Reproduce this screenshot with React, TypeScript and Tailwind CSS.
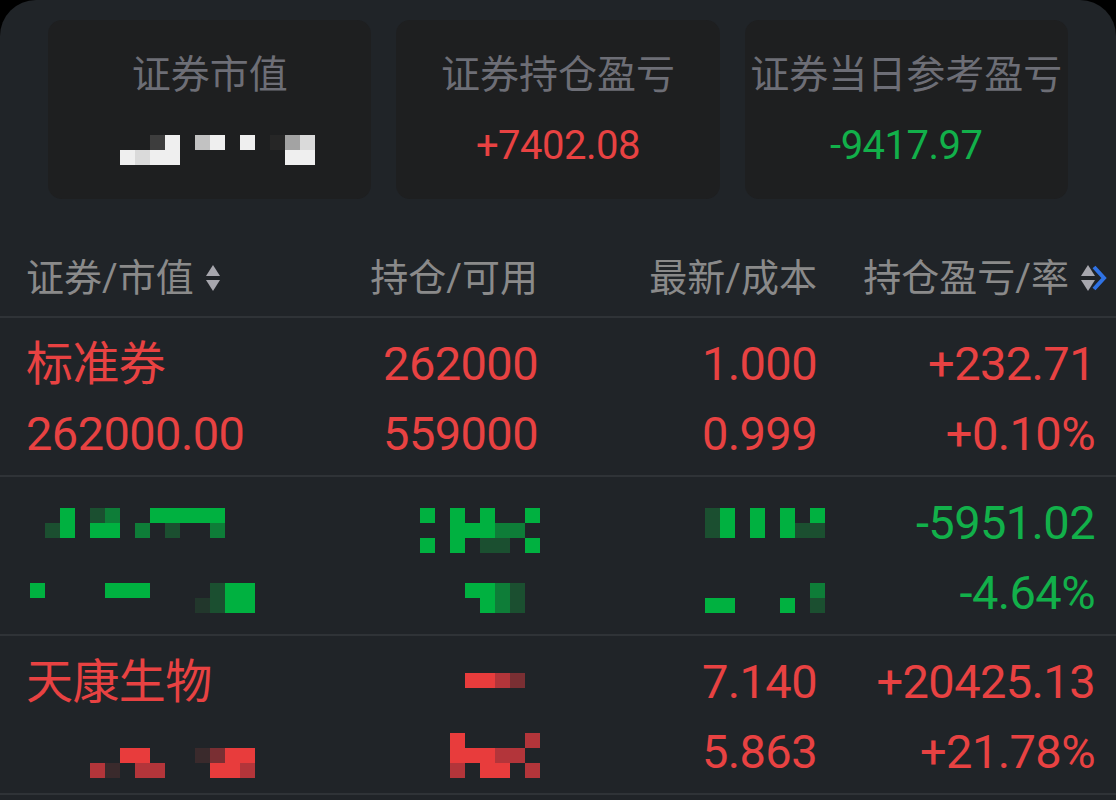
import React from "react";

type Pal = Record<string, string>;
const G: Pal = { "#": "#00b140", m: "#0e7d38", d: "#1b4f30", x: "#22372c" };
const R: Pal = { "#": "#e83c3c", m: "#b3353a", d: "#7a2f33", x: "#3a2a2c" };
const W: Pal = { "#": "#efefef", m: "#dadada", l: "#c2c2c2", g: "#a3a3a3", d: "#3d3d3d", x: "#262626" };

function Mosaic({ rows, pal, className }: { rows: string[]; pal: Pal; className?: string }) {
  const cols = Math.max(...rows.map((r) => r.length));
  return (
    <svg width={cols * 15} height={rows.length * 15} className={className} shapeRendering="crispEdges">
      {rows.flatMap((r, y) =>
        r.split("").map((c, x) =>
          c === " " ? null : <rect key={`${x}-${y}`} x={x * 15} y={y * 15} width={15} height={15} fill={pal[c]} />
        )
      )}
    </svg>
  );
}

function SortIcon() {
  return (
    <svg width="14" height="26" viewBox="0 0 14 26" className="shrink-0">
      <polygon points="7,0 14,11 0,11" fill="#a7a7ae" />
      <polygon points="0,15 14,15 7,26" fill="#a7a7ae" />
    </svg>
  );
}

const RED = "text-[#e84242]";
const GREEN = "text-[#12b04a]";

function Card({ title, children }: { title: string; children: React.ReactNode }) {
  return (
    <div className="h-[179px] rounded-[14px] bg-[#1e1f20] flex flex-col items-center pt-[30px]">
      <div className="h-[50px] flex items-center text-[39px] leading-none text-[#6d6e76] whitespace-nowrap">{title}</div>
      <div className="mt-[21px] h-[50px] w-full flex items-center justify-center text-[40px] leading-none tracking-[-0.5px] whitespace-nowrap">
        {children}
      </div>
    </div>
  );
}

const cell = "flex items-center whitespace-nowrap";
const grid =
  "grid grid-cols-[234px_278px_279px_278px] grid-rows-[70px_70px] pl-[26px] pr-[21px] text-[47px] leading-none tracking-[-0.6px]";

export default function App() {
  return (
    <div className="w-[1116px] h-[800px] bg-black overflow-hidden font-[Roboto,'Noto_Sans_CJK_SC',sans-serif]">
      <div className="h-full bg-[#202428] rounded-t-[36px]">
        {/* summary cards */}
        <div className="grid grid-cols-3 gap-[25px] px-[48px] pt-[20px]">
          <Card title="证券市值">
            <Mosaic
              pal={W}
              className="mt-[14px] ml-[16px] self-start"
              rows={["  d# l# # xgm", "#m##       ##"]}
            />
          </Card>
          <Card title="证券持仓盈亏">
            <span className={RED}>+7402.08</span>
          </Card>
          <Card title="证券当日参考盈亏">
            <span className={GREEN}>-9417.97</span>
          </Card>
        </div>

        {/* table header */}
        <div className="h-[119px] flex items-end pb-[18px] border-b-2 border-[#2f3337]">
          <div className="w-full grid grid-cols-[234px_278px_279px_278px] pl-[26px] pr-[21px] text-[38px] leading-none text-[#8a8a8a]">
            <div className={`${cell} h-[40px]`}>
              <span>证券/市值</span>
              <span className="ml-[12px]">
                <SortIcon />
              </span>
            </div>
            <div className={`${cell} h-[40px] justify-end`}>持仓/可用</div>
            <div className={`${cell} h-[40px] justify-end`}>最新/成本</div>
            <div className={`${cell} h-[40px] justify-end`}>
              <span>持仓盈亏/率</span>
              <span className="relative ml-[12px] flex">
                <svg width="18" height="26" viewBox="0 0 18 26" className="absolute left-[9px] top-0">
                  <path d="M4 2 L14 13 L4 24" fill="none" stroke="#2f72e4" strokeWidth="4" strokeLinejoin="miter" />
                </svg>
                <span className="relative">
                  <SortIcon />
                </span>
              </span>
            </div>
          </div>
        </div>

        {/* row 1 */}
        <div className="pt-[10px] pb-[7px] border-b-2 border-[#2f3337]">
          <div className={`${grid} ${RED}`}>
            <div className={cell}>标准券</div>
            <div className={`${cell} justify-end`}>262000</div>
            <div className={`${cell} justify-end`}>1.000</div>
            <div className={`${cell} justify-end`}>+232.71</div>
            <div className={cell}>262000.00</div>
            <div className={`${cell} justify-end`}>559000</div>
            <div className={`${cell} justify-end`}>0.999</div>
            <div className={`${cell} justify-end`}>+0.10%</div>
          </div>
        </div>

        {/* row 2 */}
        <div className="pt-[10px] pb-[7px] border-b-2 border-[#2f3337]">
          <div className={`${grid} ${GREEN}`}>
            <div className="flex items-start">
              <Mosaic pal={G} className="mt-[21px] ml-[19px]" rows={[" # dm  #####", "d# ## m d  m"]} />
            </div>
            <div className="flex items-start justify-end">
              <Mosaic pal={G} className="mt-[21px] mr-[-2px]" rows={["# # #  #", "  ###mm ", "# # dd #"]} />
            </div>
            <div className="flex items-start justify-end">
              <Mosaic pal={G} className="mt-[21px] mr-[-8px]" rows={["d# # # #", "d# # #dd"]} />
            </div>
            <div className={`${cell} justify-end`}>-5951.02</div>
            <div className="flex items-start">
              <Mosaic pal={G} className="mt-[26px] ml-[4px]" rows={["#    ###    d##", "           xd##"]} />
            </div>
            <div className="flex items-start justify-end">
              <Mosaic pal={G} className="mt-[26px] mr-[13px]" rows={["   ##md", "    #md"]} />
            </div>
            <div className="flex items-start justify-end">
              <Mosaic pal={G} className="mt-[26px] mr-[-8px]" rows={["       m", "##   # d"]} />
            </div>
            <div className={`${cell} justify-end`}>-4.64%</div>
          </div>
        </div>

        {/* row 3 */}
        <div className="pt-[10px] pb-[7px] border-b-2 border-[#2f3337]">
          <div className={`${grid} ${RED}`}>
            <div className={cell}>天康生物</div>
            <div className="flex items-start justify-end">
              <Mosaic pal={R} className="mt-[27px] mr-[13px]" rows={["##md"]} />
            </div>
            <div className={`${cell} justify-end`}>7.140</div>
            <div className={`${cell} justify-end`}>+20425.13</div>
            <div className="flex items-start">
              <Mosaic pal={R} className="mt-[32px] ml-[64px]" rows={["  ##   xd##", "mx mm   ##m"]} />
            </div>
            <div className="flex items-start justify-end">
              <Mosaic pal={R} className="mt-[17px] mr-[-2px]" rows={["#    m", "###mm ", "m ## m"]} />
            </div>
            <div className={`${cell} justify-end`}>5.863</div>
            <div className={`${cell} justify-end`}>+21.78%</div>
          </div>
        </div>
      </div>
    </div>
  );
}
